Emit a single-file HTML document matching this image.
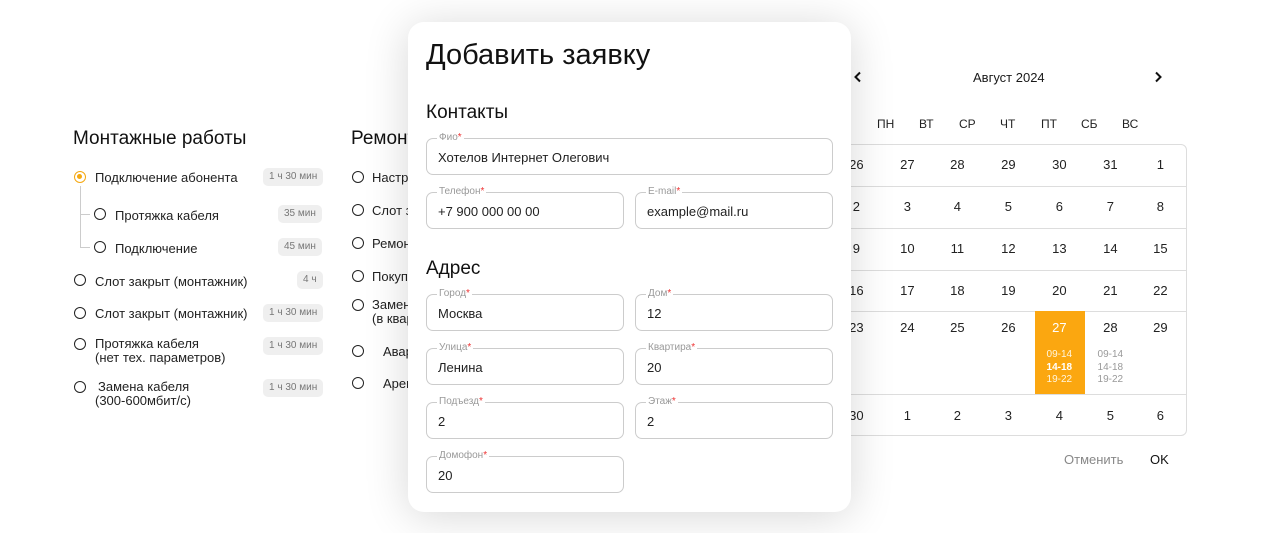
<!DOCTYPE html>
<html><head><meta charset="utf-8"><style>
*{box-sizing:border-box;margin:0;padding:0}
body{width:1280px;height:533px;overflow:hidden;background:#fff;font-family:"Liberation Sans",sans-serif;color:#1a1a1a;position:relative}
.a{position:absolute;white-space:nowrap}
.h{font-size:19px;color:#111}
.it{font-size:13px;color:#222}
.r{position:absolute;width:12px;height:12px;border:1.6px solid #222;border-radius:50%}
.ro{border-color:#f5a810}
.ro::after{content:"";position:absolute;left:2px;top:2px;width:5px;height:5px;border-radius:50%;background:#f5a810}
.b{position:absolute;height:18px;line-height:18px;font-size:10px;color:#777;background:#efefef;border-radius:5px;padding:0 6px}
.modal{position:absolute;left:408px;top:22px;width:443px;height:490px;background:#fff;border-radius:16px;box-shadow:0 4px 44px rgba(0,0,0,.16);z-index:5}
.f{position:absolute;height:37px;border:1px solid #ccc;border-radius:7px;font-size:13px;color:#222;padding:11px 0 0 11px}
.f span{position:absolute;left:10px;top:-7px;background:#fff;padding:0 2px;font-size:10px;color:#999}
.f span b{color:#e33;font-weight:normal}
.cal{position:absolute;left:831px;top:144px;width:356px;height:292px;border:1px solid #ddd;border-radius:6px}
.row{position:absolute;left:0;width:355px;border-top:1px solid #ddd}
.d{position:absolute;width:50.7px;text-align:center;font-size:13px;color:#222}
.wd{position:absolute;font-size:12px;color:#222;top:117px}
</style></head><body>
<div class="a h" style="left:73px;top:128px">Монтажные работы</div>
<div class="a h" style="left:351px;top:128px">Ремонт</div>
<div class="r ro" style="left:74px;top:171px"></div><div class="a it" style="left:95px;top:170px">Подключение абонента</div><div class="b" style="left:263px;top:168px">1 ч 30 мин</div>
<div class="a" style="left:80px;top:186px;width:1px;height:62px;background:#ccc"></div>
<div class="a" style="left:80px;top:214px;width:10px;height:1px;background:#ccc"></div>
<div class="a" style="left:80px;top:247px;width:10px;height:1px;background:#ccc"></div>
<div class="r" style="left:94px;top:208px"></div><div class="a it" style="left:115px;top:208px">Протяжка кабеля</div><div class="b" style="left:278px;top:205px">35 мин</div>
<div class="r" style="left:94px;top:241px"></div><div class="a it" style="left:115px;top:241px">Подключение</div><div class="b" style="left:278px;top:238px">45 мин</div>
<div class="r" style="left:74px;top:274px"></div><div class="a it" style="left:95px;top:274px">Слот закрыт (монтажник)</div><div class="b" style="left:297px;top:271px">4 ч</div>
<div class="r" style="left:74px;top:307px"></div><div class="a it" style="left:95px;top:306px">Слот закрыт (монтажник)</div><div class="b" style="left:263px;top:304px">1 ч 30 мин</div>
<div class="r" style="left:74px;top:338px"></div><div class="a it" style="left:95px;top:337px;line-height:14px">Протяжка кабеля<br>(нет тех. параметров)</div><div class="b" style="left:263px;top:337px">1 ч 30 мин</div>
<div class="r" style="left:74px;top:381px"></div><div class="a it" style="left:98px;top:380px;line-height:14px">Замена кабеля<br><span style="margin-left:-3px">(300-600мбит/с)</span></div><div class="b" style="left:263px;top:379px">1 ч 30 мин</div>
<div class="r" style="left:352px;top:171px"></div><div class="a it" style="left:372px;top:170px">Настройка</div>
<div class="r" style="left:352px;top:204px"></div><div class="a it" style="left:372px;top:203px">Слот закрыт</div>
<div class="r" style="left:352px;top:237px"></div><div class="a it" style="left:372px;top:236px">Ремонт</div>
<div class="r" style="left:352px;top:270px"></div><div class="a it" style="left:372px;top:269px">Покупка</div>
<div class="r" style="left:352px;top:299px"></div><div class="a it" style="left:372px;top:298px;line-height:14px">Замена<br>(в квартире)</div>
<div class="r" style="left:352px;top:345px"></div><div class="a it" style="left:383px;top:344px">Авария</div>
<div class="r" style="left:352px;top:377px"></div><div class="a it" style="left:383px;top:376px">Аренда</div>

<svg class="a" style="left:853px;top:71px" width="10" height="12" viewBox="0 0 10 12"><path d="M7 1.5L2.5 6L7 10.5" fill="none" stroke="#111" stroke-width="2"/></svg>
<div class="a" style="left:973px;top:70px;font-size:13px">Август 2024</div>
<svg class="a" style="left:1153px;top:71px" width="10" height="12" viewBox="0 0 10 12"><path d="M3 1.5L7.5 6L3 10.5" fill="none" stroke="#111" stroke-width="2"/></svg>
<div class="wd" style="left:877px">ПН</div><div class="wd" style="left:919px">ВТ</div><div class="wd" style="left:959px">СР</div><div class="wd" style="left:1000px">ЧТ</div><div class="wd" style="left:1041px">ПТ</div><div class="wd" style="left:1081px">СБ</div><div class="wd" style="left:1122px">ВС</div>
<div class="cal">
<div class="row" style="top:41px"></div><div class="row" style="top:83px"></div><div class="row" style="top:125px"></div><div class="row" style="top:166px"></div><div class="row" style="top:249px"></div>
<div style="position:absolute;left:203px;top:166px;width:50px;height:83px;background:#fba710"></div>
</div>
<div style="position:absolute;left:831px;top:144px">
<div class="d" style="left:0;top:13px">26</div><div class="d" style="left:51px;top:13px">27</div><div class="d" style="left:101px;top:13px">28</div><div class="d" style="left:152px;top:13px">29</div><div class="d" style="left:203px;top:13px">30</div><div class="d" style="left:254px;top:13px">31</div><div class="d" style="left:304px;top:13px">1</div>
<div class="d" style="left:0;top:55px">2</div><div class="d" style="left:51px;top:55px">3</div><div class="d" style="left:101px;top:55px">4</div><div class="d" style="left:152px;top:55px">5</div><div class="d" style="left:203px;top:55px">6</div><div class="d" style="left:254px;top:55px">7</div><div class="d" style="left:304px;top:55px">8</div>
<div class="d" style="left:0;top:97px">9</div><div class="d" style="left:51px;top:97px">10</div><div class="d" style="left:101px;top:97px">11</div><div class="d" style="left:152px;top:97px">12</div><div class="d" style="left:203px;top:97px">13</div><div class="d" style="left:254px;top:97px">14</div><div class="d" style="left:304px;top:97px">15</div>
<div class="d" style="left:0;top:139px">16</div><div class="d" style="left:51px;top:139px">17</div><div class="d" style="left:101px;top:139px">18</div><div class="d" style="left:152px;top:139px">19</div><div class="d" style="left:203px;top:139px">20</div><div class="d" style="left:254px;top:139px">21</div><div class="d" style="left:304px;top:139px">22</div>
<div class="d" style="left:0;top:176px">23</div><div class="d" style="left:51px;top:176px">24</div><div class="d" style="left:101px;top:176px">25</div><div class="d" style="left:152px;top:176px">26</div><div class="d" style="left:203px;top:176px;color:#fff">27</div><div class="d" style="left:254px;top:176px">28</div><div class="d" style="left:304px;top:176px">29</div>
<div class="d" style="left:203px;top:205px;font-size:10px;line-height:12.5px;color:#fff6e0">09-14<br><b style="color:#fff">14-18</b><br>19-22</div>
<div class="d" style="left:254px;top:205px;font-size:10px;line-height:12.5px;color:#999">09-14<br>14-18<br>19-22</div>
<div class="d" style="left:0;top:264px">30</div><div class="d" style="left:51px;top:264px">1</div><div class="d" style="left:101px;top:264px">2</div><div class="d" style="left:152px;top:264px">3</div><div class="d" style="left:203px;top:264px">4</div><div class="d" style="left:254px;top:264px">5</div><div class="d" style="left:304px;top:264px">6</div>
</div>
<div class="a" style="left:1064px;top:452px;font-size:13px;color:#888">Отменить</div>
<div class="a" style="left:1150px;top:452px;font-size:13px;color:#111">OK</div>

<div class="modal">
<div class="a" style="left:18px;top:17px;font-size:29px;color:#111">Добавить заявку</div>
<div class="a" style="left:18px;top:80px;font-size:19px;color:#111">Контакты</div>
<div class="f" style="left:18px;top:116px;width:407px"><span>Фио<b>*</b></span>Хотелов Интернет Олегович</div>
<div class="f" style="left:18px;top:170px;width:198px"><span>Телефон<b>*</b></span>+7 900 000 00 00</div>
<div class="f" style="left:227px;top:170px;width:198px"><span>E-mail<b>*</b></span>example@mail.ru</div>
<div class="a" style="left:18px;top:236px;font-size:19px;color:#111">Адрес</div>
<div class="f" style="left:18px;top:272px;width:198px"><span>Город<b>*</b></span>Москва</div>
<div class="f" style="left:227px;top:272px;width:198px"><span>Дом<b>*</b></span>12</div>
<div class="f" style="left:18px;top:326px;width:198px"><span>Улица<b>*</b></span>Ленина</div>
<div class="f" style="left:227px;top:326px;width:198px"><span>Квартира<b>*</b></span>20</div>
<div class="f" style="left:18px;top:380px;width:198px"><span>Подъезд<b>*</b></span>2</div>
<div class="f" style="left:227px;top:380px;width:198px"><span>Этаж<b>*</b></span>2</div>
<div class="f" style="left:18px;top:434px;width:198px"><span>Домофон<b>*</b></span>20</div>
</div>
</body></html>
